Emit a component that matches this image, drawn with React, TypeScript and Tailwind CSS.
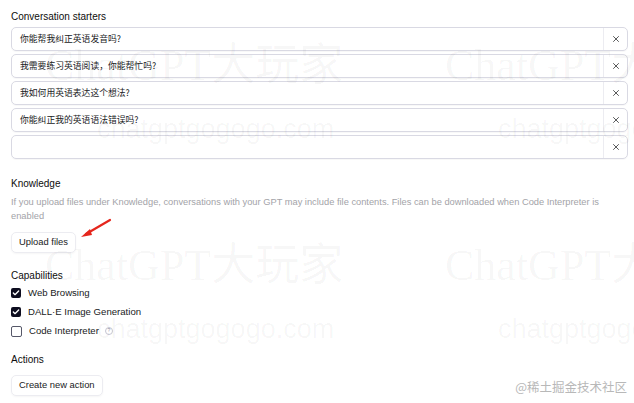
import { X, Check } from 'lucide-react';

const starters = [
  '你能帮我纠正英语发音吗?',
  '我需要练习英语阅读，你能帮忙吗?',
  '我如何用英语表达这个想法?',
  '你能纠正我的英语语法错误吗?',
  '',
];

const caps = [
  { label: 'Web Browsing', checked: true },
  { label: 'DALL·E Image Generation', checked: true },
  { label: 'Code Interpreter', checked: false, info: true },
];

function Watermark({ top }: { top: number }) {
  return (
    <>
      <div
        className="absolute left-[45px] text-[44px] leading-none text-black/[0.04] font-['Liberation_Serif','Noto_Sans_CJK_SC',serif] whitespace-nowrap"
        style={{ top }}
      >
        ChatGPT大玩家
      </div>
      <div
        className="absolute left-[445px] text-[44px] leading-none text-black/[0.04] font-['Liberation_Serif','Noto_Sans_CJK_SC',serif] whitespace-nowrap"
        style={{ top }}
      >
        ChatGPT大玩家
      </div>
      <div
        className="absolute left-[97px] text-[27px] leading-none text-black/[0.04] whitespace-nowrap"
        style={{ top: top + 72 }}
      >
        chatgptgogogo.com
      </div>
      <div
        className="absolute left-[498px] text-[27px] leading-none text-black/[0.04] whitespace-nowrap"
        style={{ top: top + 72 }}
      >
        chatgptgogogo.com
      </div>
    </>
  );
}

export default function App() {
  return (
    <div className="relative w-[634px] h-[403px] overflow-hidden bg-white text-[#0d0d0d] font-['Liberation_Sans','Noto_Sans_CJK_SC',sans-serif]">
      <div className="pl-[11px] pr-[6px] pt-[11px] flex flex-col items-start">
        <div className="text-[10px] leading-[12px]">Conversation starters</div>

        <div className="mt-[4px] w-full flex flex-col gap-[3px]">
          {starters.map((s, i) => (
            <div
              key={i}
              className="flex h-[24px] items-stretch rounded-[5px] border border-[#d9d9e3] shadow-[0_1px_1px_rgba(0,0,0,0.03)]"
            >
              <div className="flex-1 flex items-center pl-[8px] text-[8.8px] text-[#202123] font-['Noto_Sans_CJK_SC',sans-serif]">
                {s}
              </div>
              <div className="w-[24px] flex items-center justify-center border-l border-[#ececf1]">
                <X size={10} strokeWidth={1.8} className="text-[#202123]" />
              </div>
            </div>
          ))}
        </div>

        <div className="mt-[19px] text-[10px] leading-[12px]">Knowledge</div>
        <div className="mt-[5px] text-[9.3px] leading-[14px] text-[#a3a3a8] pr-[20px]">
          If you upload files under Knowledge, conversations with your GPT may include file contents. Files can be downloaded when Code Interpreter is enabled
        </div>

        <div className="relative mt-[9px]">
          <button className="block h-[21px] px-[7px] rounded-[5px] border border-[#ececf1] text-[9.4px] text-[#202123] shadow-[0_1px_2px_rgba(0,0,0,0.04)]">
            Upload files
          </button>
          <svg
            className="absolute left-[65px] top-[-14px]"
            width="40"
            height="22"
            viewBox="0 0 40 22"
          >
            <path d="M34 2 L10 16" stroke="#e5261d" strokeWidth="2.2" strokeLinecap="round" />
            <path d="M5 19 L14 11 L16 17 Z" fill="#e5261d" />
          </svg>
        </div>

        <div className="mt-[17px] text-[10px] leading-[12px]">Capabilities</div>
        <div className="mt-[5px] flex flex-col gap-[7px]">
          {caps.map((c) => (
            <div key={c.label} className="flex items-center h-[12px]">
              {c.checked ? (
                <div className="w-[10px] h-[10px] rounded-[2px] bg-[#0d0d1f] flex items-center justify-center">
                  <Check size={8} strokeWidth={4} className="text-white" />
                </div>
              ) : (
                <div className="w-[11px] h-[11px] rounded-[2px] border border-[#565869] bg-white" />
              )}
              <span className="ml-[7px] text-[9.6px] text-[#202123]">{c.label}</span>
              {c.info && (
                <span className="ml-[6px] w-[8px] h-[8px] rounded-full border border-[#c5c5d2] text-[5px] text-[#8e8ea0] flex items-center justify-center">
                  ?
                </span>
              )}
            </div>
          ))}
        </div>

        <div className="mt-[17px] text-[10px] leading-[12px]">Actions</div>
        <button className="block mt-[9px] h-[21px] px-[7px] rounded-[5px] border border-[#ececf1] text-[9.4px] text-[#202123] shadow-[0_1px_2px_rgba(0,0,0,0.04)]">
          Create new action
        </button>
      </div>

      <div className="pointer-events-none">
        <Watermark top={44} />
        <Watermark top={244} />
      </div>

      <div className="absolute right-[7px] bottom-[6px] text-[12.5px] text-[#b8b8b8] font-['Noto_Sans_CJK_SC',sans-serif]">
        @稀土掘金技术社区
      </div>
    </div>
  );
}
